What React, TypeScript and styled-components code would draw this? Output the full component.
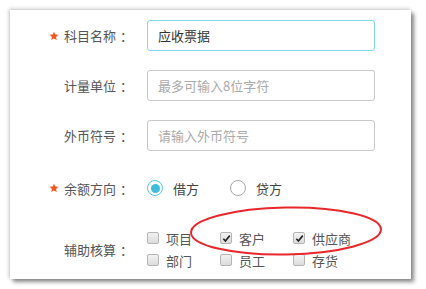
import styled, { createGlobalStyle } from "styled-components";

const GlobalStyle = createGlobalStyle`
    html, body {
        margin: 0;
        padding: 0;
        background: #ffffff;
        font-family: "Noto Sans CJK SC", "Noto Sans", sans-serif;
    }
`;

const Page = styled.div`
    width: 426px;
    height: 289px;
    padding: 10px 0 0 10px;
    box-sizing: border-box;
`;

const Card = styled.div`
    position: relative;
    width: 401px;
    height: 269px;
    box-sizing: border-box;
    padding-top: 10px;
    background: #ffffff;
    box-shadow: 3px 3px 4px rgba(0, 0, 0, 0.45), -1px -1px 4px rgba(0, 0, 0, 0.22);
`;

const Row = styled.div<{ $mt: number; $h: number }>`
    display: flex;
    align-items: center;
    height: ${(p) => p.$h}px;
    margin-top: ${(p) => p.$mt}px;
`;

const Label = styled.div`
    width: 123px;
    margin-right: 14px;
    flex-shrink: 0;
    display: flex;
    justify-content: flex-end;
    align-items: center;
    font-size: 13px;
    color: #555555;
    white-space: nowrap;
`;

const Colon = styled.span`
    margin-left: 4px;
`;

const Star = styled.svg`
    width: 10px;
    height: 10px;
    margin-right: 5px;
`;

const Input = styled.input<{ $focus?: boolean }>`
    width: 228px;
    height: 31px;
    box-sizing: border-box;
    padding: 0 10px;
    border: 1px solid ${(p) => (p.$focus ? "#7dd8e8" : "#c8c8c8")};
    border-radius: 3px;
    font-family: "Noto Sans CJK SC", sans-serif;
    font-size: 13px;
    color: #333333;
    outline: none;
    background: #ffffff;
    &::placeholder {
        color: #aaaaaa;
    }
`;

const RadioGroup = styled.div`
    display: flex;
    align-items: center;
`;

const RadioItem = styled.label`
    display: flex;
    align-items: center;
    width: 83px;
    font-size: 13px;
    color: #444444;
`;

const RadioCircle = styled.span<{ $on?: boolean }>`
    width: 16px;
    height: 16px;
    box-sizing: border-box;
    border-radius: 50%;
    border: ${(p) => (p.$on ? "1.5px solid #57c6e0" : "1px solid #a8a8a8")};
    margin-right: 10px;
    display: flex;
    align-items: center;
    justify-content: center;
    &::after {
        content: "";
        display: ${(p) => (p.$on ? "block" : "none")};
        width: 9px;
        height: 9px;
        border-radius: 50%;
        background: #3fbddb;
    }
`;

const CheckGrid = styled.div`
    display: grid;
    grid-template-columns: 73px 73px 73px;
    grid-auto-rows: 22px;
`;

const CheckItem = styled.label`
    display: flex;
    align-items: center;
    font-size: 13px;
    color: #555555;
`;

const Box = styled.span`
    width: 12px;
    height: 12px;
    box-sizing: border-box;
    border: 1px solid #b4b4b4;
    border-radius: 2px;
    background: linear-gradient(#f2f2f2, #dcdcdc);
    margin-right: 7px;
    display: flex;
    align-items: center;
    justify-content: center;
`;

const Ring = styled.svg`
    position: absolute;
    left: 0;
    top: 0;
    pointer-events: none;
`;

function StarIcon() {
    return (
        <Star viewBox="0 0 24 24">
            <path d="M12 1.5l3.1 7.1 7.6.6-5.8 5 1.8 7.5L12 17.7l-6.7 4 1.8-7.5-5.8-5 7.6-.6z" fill="#f2571d" />
        </Star>
    );
}

function Check({ checked, text }: { checked?: boolean; text: string }) {
    return (
        <CheckItem>
            <Box>
                {checked && (
                    <svg width="9" height="9" viewBox="0 0 10 10">
                        <path d="M1.5 5.2l2.3 2.5L8.6 1.8" stroke="#222" strokeWidth="1.8" fill="none" />
                    </svg>
                )}
            </Box>
            {text}
        </CheckItem>
    );
}

export default function App() {
    return (
        <>
            <GlobalStyle />
            <Page>
                <Card>
                    <Row $mt={0} $h={31}>
                        <Label>
                            <StarIcon />
                            科目名称<Colon>：</Colon>
                        </Label>
                        <Input $focus defaultValue="应收票据" />
                    </Row>
                    <Row $mt={19} $h={31}>
                        <Label>
                            计量单位<Colon>：</Colon>
                        </Label>
                        <Input placeholder="最多可输入8位字符" />
                    </Row>
                    <Row $mt={19} $h={31}>
                        <Label>
                            外币符号<Colon>：</Colon>
                        </Label>
                        <Input placeholder="请输入外币符号" />
                    </Row>
                    <Row $mt={22} $h={30}>
                        <Label>
                            <StarIcon />
                            余额方向<Colon>：</Colon>
                        </Label>
                        <RadioGroup>
                            <RadioItem>
                                <RadioCircle $on />
                                借方
                            </RadioItem>
                            <RadioItem>
                                <RadioCircle />
                                贷方
                            </RadioItem>
                        </RadioGroup>
                    </Row>
                    <Row $mt={24} $h={44}>
                        <Label>
                            辅助核算<Colon>：</Colon>
                        </Label>
                        <CheckGrid>
                            <Check text="项目" />
                            <Check checked text="客户" />
                            <Check checked text="供应商" />
                            <Check text="部门" />
                            <Check text="员工" />
                            <Check text="存货" />
                        </CheckGrid>
                    </Row>
                    <Ring width="401" height="269">
                        <ellipse cx="276" cy="221" rx="95" ry="23.5" fill="none" stroke="#e9262b" strokeWidth="2" transform="rotate(-1 276 221)" />
                    </Ring>
                </Card>
            </Page>
        </>
    );
}
